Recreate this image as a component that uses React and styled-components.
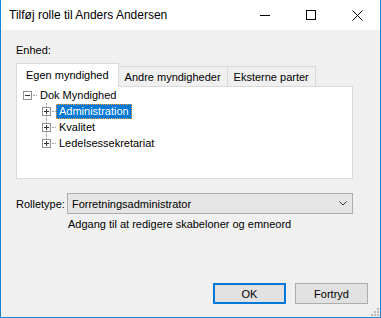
import React from 'react'
import styled, { createGlobalStyle, css } from 'styled-components'

const GlobalStyle = createGlobalStyle`
  html, body { margin: 0; padding: 0; background: #ffffff; }
  body { font-family: "Liberation Sans", Arial, sans-serif; font-size: 11px; color: #000; }
`

const Window = styled.div`
  width: 381px;
  height: 318px;
  box-sizing: border-box;
  border: 1px solid #1883d7;
  border-top: none;
  display: flex;
  flex-direction: column;
  background: #f0f0f0;
`
const TitleBar = styled.div`
  height: 30px;
  background: #ffffff;
  display: flex;
  align-items: center;
  flex-shrink: 0;
`
const Title = styled.div`
  flex: 1;
  padding-left: 8px;
  font-size: 12px;
  color: #000;
`
const CaptionButton = styled.div`
  width: 46px;
  height: 30px;
  display: flex;
  align-items: center;
  justify-content: center;
`
const Body = styled.div`
  flex: 1;
  display: flex;
  flex-direction: column;
  padding: 13px 0 0 15px;
  position: relative;
`
const Label = styled.div`
  height: 14px;
  line-height: 14px;
`
const TabStrip = styled.div`
  display: flex;
  align-items: flex-end;
  margin-top: 6px;
  height: 23px;
  position: relative;
  z-index: 1;
`
const Tab = styled.div`
  box-sizing: border-box;
  border: 1px solid #d9d9d9;
  border-bottom: none;
  margin-left: -1px;
  padding: 0 6px;
  display: flex;
  align-items: center;
  ${p => p.$active ? css`
    background: #ffffff;
    margin-left: 0;
    padding: 0 9px 1px 9px;
    margin-bottom: -1px;
    height: 24px;
  ` : css`
    height: 20px;
    background: #f0f0f0;
  `}
  &:first-child { margin-left: 0; }
`
const TabPanel = styled.div`
  width: 337px;
  height: 93px;
  box-sizing: border-box;
  border: 1px solid #d9d9d9;
  background: #ffffff;
  padding: 0 0 0 5px;
`
const TreeRow = styled.div`
  height: 16px;
  display: flex;
  align-items: center;
  position: relative;
  padding-left: ${p => p.$indent}px;
  ${p => p.$child && css`
    &::before {
      content: '';
      position: absolute;
      left: ${p.$indent + 4}px;
      top: 0;
      height: ${p.$last ? '8px' : '16px'};
      border-left: 1px dotted #a0a0a0;
    }
  `}
`
const Expander = styled.div`
  width: 9px;
  height: 9px;
  box-sizing: border-box;
  border: 1px solid #919191;
  background: #fff;
  position: relative;
  z-index: 1;
  display: flex;
  align-items: center;
  justify-content: center;
`
const Dots = styled.div`
  width: 4px;
  margin-left: 1px;
  border-top: 1px dotted #a0a0a0;
`
const NodeText = styled.div`
  height: 15px;
  line-height: 13px;
  box-sizing: border-box;
  padding: 0 2px;
  border: 1px solid transparent;
  ${p => p.$selected && css`
    background: #0078d7;
    color: #fff;
    border: 1px dotted #f0a030;
  `}
`
const RoleRow = styled.div`
  display: flex;
  align-items: center;
  margin-top: 14px;
`
const ComboBox = styled.div`
  margin-left: 2px;
  width: 286px;
  height: 21px;
  box-sizing: border-box;
  border: 1px solid #adadad;
  background: #e5e5e5;
  display: flex;
  align-items: center;
  padding: 0 5px 0 4px;
`
const ComboText = styled.div`
  flex: 1;
`
const Description = styled.div`
  margin: 3px 0 0 52px;
  height: 14px;
  line-height: 14px;
`
const ButtonRow = styled.div`
  margin-top: auto;
  margin-bottom: 13px;
  display: flex;
  justify-content: flex-end;
  gap: 9px;
  padding-right: 12px;
`
const Button = styled.div`
  width: 73px;
  height: 21px;
  box-sizing: border-box;
  border: 1px solid #adadad;
  background: #e1e1e1;
  display: flex;
  align-items: center;
  justify-content: center;
  ${p => p.$default && css`
    border: 2px solid #0078d7;
  `}
`
const Grip = styled.svg`
  position: absolute;
  right: 1px;
  bottom: 1px;
`

const Sign = ({ plus }) => (
  <svg width="7" height="7" viewBox="0 0 7 7">
    <path d="M1 3.5h5" stroke="#353535" strokeWidth="1" />
    {plus && <path d="M3.5 1v5" stroke="#353535" strokeWidth="1" />}
  </svg>
)

const children = ['Administration', 'Kvalitet', 'Ledelsessekretariat']

export default function App() {
  return (
    <>
      <GlobalStyle />
      <Window>
        <TitleBar>
          <Title>Tilføj rolle til Anders Andersen</Title>
          <CaptionButton>
            <svg width="11" height="11" viewBox="0 0 11 11"><path d="M0 5.5h10" stroke="#000" /></svg>
          </CaptionButton>
          <CaptionButton>
            <svg width="11" height="11" viewBox="0 0 11 11"><rect x="0.5" y="0.5" width="9" height="9" fill="none" stroke="#000" /></svg>
          </CaptionButton>
          <CaptionButton>
            <svg width="11" height="11" viewBox="0 0 11 11"><path d="M0.5 0.5l10 10M10.5 0.5l-10 10" stroke="#000" /></svg>
          </CaptionButton>
        </TitleBar>
        <Body>
          <Label>Enhed:</Label>
          <TabStrip>
            <Tab $active>Egen myndighed</Tab>
            <Tab>Andre myndigheder</Tab>
            <Tab>Eksterne parter</Tab>
          </TabStrip>
          <TabPanel>
            <TreeRow $indent={1}>
              <Expander><Sign /></Expander>
              <Dots />
              <NodeText>Dok Myndighed</NodeText>
            </TreeRow>
            {children.map((c, i) => (
              <TreeRow key={c} $indent={20} $child $last={i === children.length - 1}>
                <Expander><Sign plus /></Expander>
                <Dots />
                <NodeText $selected={i === 0}>{c}</NodeText>
              </TreeRow>
            ))}
          </TabPanel>
          <RoleRow>
            <Label>Rolletype:</Label>
            <ComboBox>
              <ComboText>Forretningsadministrator</ComboText>
              <svg width="8" height="5" viewBox="0 0 8 5"><path d="M0.5 0.5l3.5 3.5 3.5-3.5" fill="none" stroke="#333" /></svg>
            </ComboBox>
          </RoleRow>
          <Description>Adgang til at redigere skabeloner og emneord</Description>
          <ButtonRow>
            <Button $default>OK</Button>
            <Button>Fortryd</Button>
          </ButtonRow>
          <Grip width="8" height="8" viewBox="0 0 8 8">
            {[[6, 0], [6, 3], [3, 3], [6, 6], [3, 6], [0, 6]].map(([x, y]) => (
              <rect key={`${x}-${y}`} x={x} y={y} width="2" height="2" fill="#b8b8b8" />
            ))}
          </Grip>
        </Body>
      </Window>
    </>
  )
}
